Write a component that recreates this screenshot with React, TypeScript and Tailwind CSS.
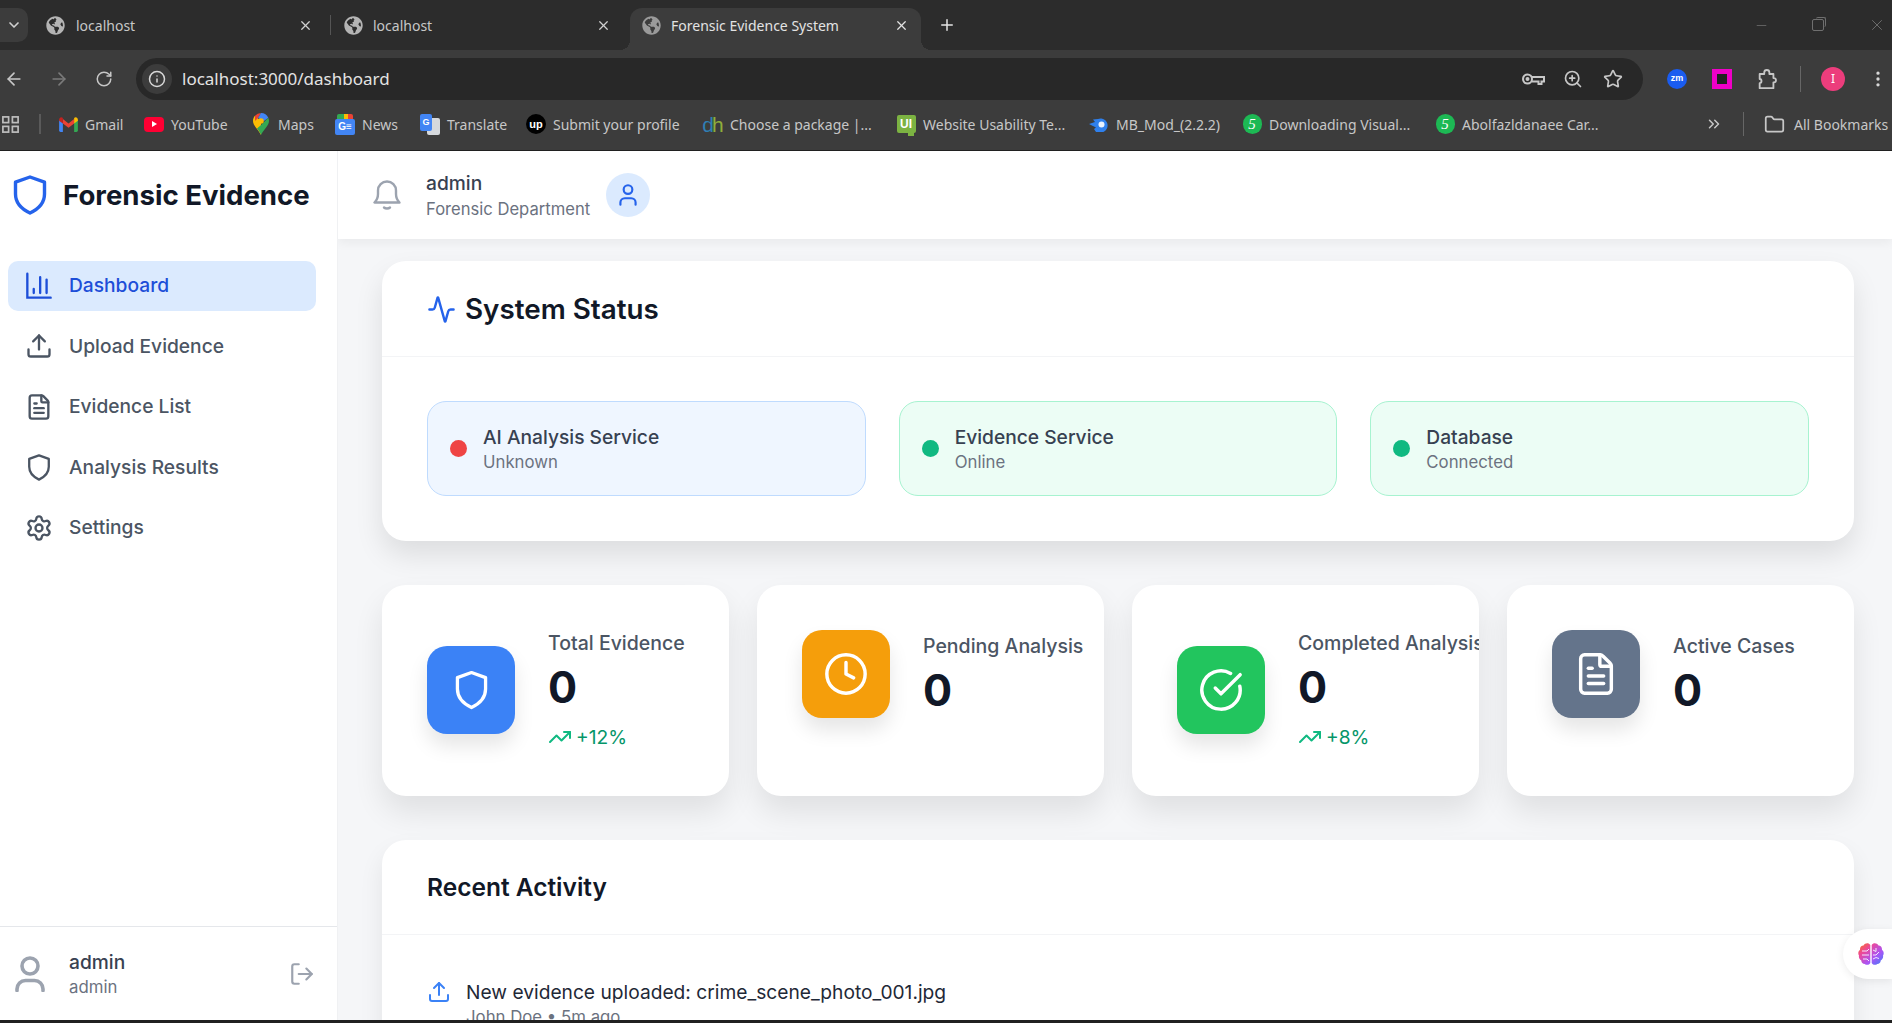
import {
  Activity,
  ArrowLeft,
  ArrowRight,
  ChevronDown,
  ChevronsRight,
  CircleCheckBig,
  Clock,
  EllipsisVertical,
  FileText,
  Folder,
  Info,
  LogOut,
  Minus,
  Plus,
  RotateCw,
  Settings,
  Star,
  TrendingUp,
  Upload,
  User,
  X,
  ZoomIn,
} from "lucide-react"
import { FaGlobeAmericas } from "react-icons/fa"
import type { ReactNode } from "react"

function ShieldIcon({ className }: { className: string }) {
  return (
    <svg viewBox="0 0 34 40" fill="none" stroke="currentColor" strokeWidth="3.4" strokeLinejoin="round" className={className}>
      <path d="M17 2 31.5 7.2V19c0 8.6-6 15-14.5 19C8.500 34 2.500 27.600 2.500 19V7.200Z" />
    </svg>
  )
}

function BarsIcon({ className }: { className: string }) {
  return (
    <svg viewBox="0 0 24 24" fill="none" stroke="currentColor" strokeWidth="2" strokeLinecap="round" className={className}>
      <path d="M2 1.500V22h20M7.500 18v-3.500M13 18V4.500M18.500 18V6.500" />
    </svg>
  )
}

function BellIcon({ className }: { className: string }) {
  return (
    <svg viewBox="0 0 28 30" fill="none" stroke="currentColor" strokeWidth="2.400" strokeLinecap="round" strokeLinejoin="round" className={className}>
      <path d="M1.500 22.500h25c-2-2-3.500-4-3.500-8.500v-3.500a9 9 0 0 0-18 0V14c0 4.500-1.500 6.500-3.500 8.500Z" />
      <path d="M11 27.500c1.500 1.300 4.500 1.300 6 0" />
    </svg>
  )
}

function PersonIcon({ className }: { className: string }) {
  return (
    <svg viewBox="0 0 30 36" fill="none" stroke="currentColor" strokeWidth="3.600" strokeLinecap="round" className={className}>
      <circle cx="15" cy="10" r="8" />
      <path d="M2 34.500V33a8.500 8.500 0 0 1 8.500-8.500h9A8.500 8.500 0 0 1 28 33v1.500" />
    </svg>
  )
}

function KeyIcon({ className }: { className: string }) {
  return (
    <svg viewBox="0 0 24 24" fill="none" stroke="currentColor" strokeWidth="2" className={className}>
      <circle cx="6.500" cy="12" r="4.500" />
      <circle cx="6.500" cy="12" r="1" fill="currentColor" />
      <path d="M11 10h12v4.500h-2.500V17h-3v-2.500H11" />
    </svg>
  )
}

function AppsIcon({ className }: { className: string }) {
  return (
    <svg viewBox="0 0 20 20" fill="none" stroke="currentColor" strokeWidth="1.800" className={className}>
      <rect x="2" y="2" width="6" height="6" />
      <rect x="12" y="2" width="6" height="6" />
      <rect x="2" y="12" width="6" height="6" />
      <rect x="12" y="12" width="6" height="6" />
    </svg>
  )
}

function ExtensionIcon({ className }: { className: string }) {
  return (
    <svg viewBox="0 0 24 24" fill="none" stroke="currentColor" strokeWidth="2" strokeLinejoin="round" className={className}>
      <path d="M4 6.500h5V5a2.800 2.800 0 0 1 5.600 0v1.500H19V11h.5a2.300 2.300 0 0 1 0 4.600H19V22H4v-5.500c1.500 0 2-1 2-2.200S5.500 12 4 12Z" />
    </svg>
  )
}

function GmailIcon() {
  return (
    <svg viewBox="0 0 20 16" className="h-[15px] w-[19px]">
      <path d="M0 3v11.500A1.500 1.500 0 0 0 1.500 16H4V6.500Z" fill="#4285f4" />
      <path d="M20 3v11.500a1.500 1.500 0 0 1-1.500 1.500H16V6.500Z" fill="#34a853" />
      <path d="M4 2 10 7l6-5v5l-6 4.500L4 7Z" fill="#ea4335" />
      <path d="M0 3c0-2.500 2.500-3.500 4-2v6L0 4Z" fill="#c5221f" />
      <path d="M20 3c0-2.500-2.500-3.500-4-2v6l4-3Z" fill="#fbbc04" />
    </svg>
  )
}

function YoutubeIcon() {
  return (
    <div className="flex h-[15px] w-[20px] items-center justify-center rounded-[4px] bg-[#ff0033]">
      <div className="h-0 w-0 border-y-[3px] border-l-[5px] border-y-transparent border-l-white" />
    </div>
  )
}

function MapsIcon() {
  return (
    <svg viewBox="0 0 16 22" className="h-[22px] w-[16px]">
      <path d="M8 22C6 17 0 13 0 8c0-2 .7-3.800 2-5.200L8 8Z" fill="#fbbc04" />
      <path d="M8 22c2-5 8-9 8-14 0-1.200-.3-2.300-.7-3.300L8 12l-4 3.500C5.500 17.500 7.200 19.500 8 22Z" fill="#34a853" />
      <path d="M2 2.800A8 8 0 0 1 8 0l-3 5L2 8Z" fill="#ea4335" />
      <path d="M8 0a8 8 0 0 1 7.300 4.700L11 8 5 5Z" fill="#4285f4" />
      <circle cx="8" cy="8" r="2.800" fill="#fbbc04" />
    </svg>
  )
}

function NewsIcon() {
  return (
    <div className="relative h-[21px] w-[20px]">
      <div className="absolute left-[2px] top-0 h-[8px] w-[16px] rounded-t-[2px] bg-[linear-gradient(90deg,#34a853_0_45%,#fbbc04_45%_70%,#ea4335_70%)]" />
      <div className="absolute bottom-0 left-0 flex h-[16px] w-[20px] items-center justify-center rounded-[2px] bg-[#4285f4] font-['Liberation_Sans',sans-serif] text-[10px] leading-none font-bold text-white">
        G≡
      </div>
    </div>
  )
}

function TranslateIcon() {
  return (
    <div className="relative h-[21px] w-[20px]">
      <div className="absolute right-0 bottom-0 h-[17px] w-[13px] rounded-[2px] bg-[#d5d8dc]" />
      <div className="absolute top-0 left-0 flex h-[17px] w-[12px] items-center justify-center rounded-[2px] bg-[#4285f4] font-['Liberation_Sans',sans-serif] text-[9px] leading-none font-bold text-white">
        G
      </div>
    </div>
  )
}

function UpworkIcon() {
  return (
    <div className="flex h-[20px] w-[20px] items-center justify-center rounded-full bg-black font-['Liberation_Sans',sans-serif] text-[11px] leading-none font-bold text-white">
      up
    </div>
  )
}

function DhIcon() {
  return (
    <div className="font-['Liberation_Sans',sans-serif] text-[21px] leading-none">
      <span className="text-[#2f7fb5]">d</span>
      <span className="ml-[-2px] text-[#8fae3a]">h</span>
    </div>
  )
}

function UiIcon() {
  return (
    <div className="relative flex h-[18px] w-[19px] items-center justify-center rounded-[2px] bg-[#7cb342] font-['Liberation_Sans',sans-serif] text-[12px] leading-none font-bold text-white">
      UI
      <div className="absolute right-[2px] bottom-[-3px] h-[5px] w-[6px] bg-[#7cb342]" />
    </div>
  )
}

function CometIcon() {
  return (
    <svg viewBox="0 0 20 16" className="h-[16px] w-[20px]">
      <path d="M0 8 6 6 4 3.500 9 3a7 7 0 1 1 0 13H7l-2-3 2-1.500Z" fill="#2f80ed" />
      <circle cx="12.500" cy="8.500" r="3" fill="#e8f2ff" />
    </svg>
  )
}

function FiveIcon() {
  return (
    <div className="flex h-[20px] w-[19px] items-center justify-center rounded-full bg-[#1db954] font-['Liberation_Serif',serif] text-[15px] leading-none text-white italic">
      5
    </div>
  )
}

function BrainIcon() {
  return (
    <svg viewBox="0 0 26 24" className="h-[24px] w-[26px]">
      <defs>
        <linearGradient id="brainFill" x1="0" y1="0" x2="1" y2="1">
          <stop offset="0" stopColor="#f97316" />
          <stop offset="0.3" stopColor="#ec4899" />
          <stop offset="0.65" stopColor="#a855f7" />
          <stop offset="1" stopColor="#3b82f6" />
        </linearGradient>
      </defs>
      <path
        d="M12.300 3v18c-1 2-4 2.500-5.500 1-2 0-3.500-1.500-3.500-3.500C1.500 17.500.5 15.500 1 13.500-.3 11.500.3 9 2 8c-.3-2.500 1.300-4.500 3.500-4.500C7 .8 10.800.5 12.300 3ZM13.700 3v18c1 2 4 2.500 5.500 1 2 0 3.500-1.500 3.500-3.500 1.800-1 2.800-3 2.300-5 1.300-2 .7-4.500-1-5.500.3-2.500-1.300-4.500-3.500-4.500C19 .8 15.200.5 13.700 3Z"
        fill="url(#brainFill)"
      />
      <path
        d="M4 9h5l2-2M4 13h7M5 17h4l2 2M15 8l3 1.500V6M15 13h3l3-3M15 17l3-1.500 3 1"
        fill="none"
        stroke="#f3e8ff"
        strokeWidth="1"
      />
    </svg>
  )
}

const bookmarks: { label: string; icon: ReactNode; width: string }[] = [
  { label: "Gmail", icon: <GmailIcon />, width: "w-[86px]" },
  { label: "YouTube", icon: <YoutubeIcon />, width: "w-[107px]" },
  { label: "Maps", icon: <MapsIcon />, width: "w-[84px]" },
  { label: "News", icon: <NewsIcon />, width: "w-[85px]" },
  { label: "Translate", icon: <TranslateIcon />, width: "w-[106px]" },
  { label: "Submit your profile", icon: <UpworkIcon />, width: "w-[177px]" },
  { label: "Choose a package |...", icon: <DhIcon />, width: "w-[193px]" },
  { label: "Website Usability Te...", icon: <UiIcon />, width: "w-[193px]" },
  { label: "MB_Mod_(2.2.2)", icon: <CometIcon />, width: "w-[153px]" },
  { label: "Downloading Visual...", icon: <FiveIcon />, width: "w-[193px]" },
  { label: "Abolfazldanaee Car...", icon: <FiveIcon />, width: "w-[270px]" },
]

function BrowserChrome() {
  return (
    <div className="h-[151px] shrink-0 font-['Noto_Sans',sans-serif] text-[#c7c7c7]">
      {/* tab strip */}
      <div className="flex h-[50px] bg-[#2c2c2c]">
        <div className="mt-[8px] flex h-[34px] w-[28px] items-center justify-center rounded-r-[10px] bg-[#3c3c3c]">
          <ChevronDown size={16} strokeWidth={2.5} className="text-[#d0d0d0]" />
        </div>
        <div className="ml-[8px] flex w-[294px] items-center pl-[10px] text-[14px]">
          <FaGlobeAmericas size={19} className="text-[#b4b4b4]" />
          <span className="ml-[11px]">localhost</span>
          <X size={15} className="mr-[17px] ml-auto text-[#d0d0d0]" />
        </div>
        <div className="my-[15px] w-px bg-[#555555]" />
        <div className="flex w-[299px] items-center pl-[13px] text-[14px]">
          <FaGlobeAmericas size={19} className="text-[#b4b4b4]" />
          <span className="ml-[10px]">localhost</span>
          <X size={15} className="mr-[19px] ml-auto text-[#d0d0d0]" />
        </div>
        <div className="relative mt-[8px] flex h-[42px] w-[291px] items-center rounded-t-[12px] bg-[#3c3c3c] pb-[8px] pl-[12px] text-[14px] text-[#e3e3e3]">
          <div className="absolute bottom-0 left-[-10px] size-[10px] bg-[radial-gradient(circle_at_0_0,transparent_10px,#3c3c3c_10px)]" />
          <div className="absolute right-[-10px] bottom-0 size-[10px] bg-[radial-gradient(circle_at_100%_0,transparent_10px,#3c3c3c_10px)]" />
          <FaGlobeAmericas size={19} className="text-[#9a9a9a]" />
          <span className="ml-[10px] whitespace-nowrap">Forensic Evidence System</span>
          <X size={15} className="mr-[12px] ml-auto text-[#e3e3e3]" />
        </div>
        <div className="ml-[17px] flex items-center">
          <Plus size={18} className="text-[#e3e3e3]" />
        </div>
        <div className="ml-auto flex items-center text-[#6f6f6f]">
          <Minus size={15} strokeWidth={1.25} className="mr-[43px]" />
          <div className="relative mr-[44px] size-[12px] rounded-[2px] border border-[#6f6f6f]">
            <div className="absolute top-[-3px] right-[-3px] h-[10px] w-[10px] rounded-[2px] border-t border-r border-[#6f6f6f]" />
          </div>
          <X size={18} strokeWidth={1.25} className="mr-[6px]" />
        </div>
      </div>

      {/* address bar and bookmarks */}
      <div className="h-[100px] bg-[#3c3c3c]">
        <div className="flex h-[50px] items-end">
          <div className="flex h-[42px] w-[136px] items-center text-[#c7c7c7]">
            <ArrowLeft size={20} className="ml-[4px]" />
            <ArrowRight size={20} className="ml-[25px] text-[#7a7a7a]" />
            <RotateCw size={18} className="ml-[26px]" />
          </div>
          <div className="flex h-[42px] w-[1507px] items-center rounded-full bg-[#282828] pr-[20px] pl-[6px]">
            <div className="flex size-[30px] items-center justify-center rounded-full bg-[#3c3c3c]">
              <Info size={18} className="text-[#d8d8d8]" />
            </div>
            <span className="ml-[10px] text-[17px] text-[#e3e3e3]">localhost:3000/dashboard</span>
            <KeyIcon className="ml-auto h-[24px] w-[24px] text-[#c7c7c7]" />
            <ZoomIn size={20} className="ml-[18px] text-[#c7c7c7]" />
            <Star size={20} className="ml-[20px] text-[#c7c7c7]" />
          </div>
          <div className="flex h-[42px] flex-1 items-center">
            <div className="ml-[24px] flex size-[20px] items-center justify-center rounded-full bg-[#1a5cf0] font-['Liberation_Sans',sans-serif] text-[9px] font-bold text-white">
              zm
            </div>
            <div className="ml-[25px] size-[20px] border-[5px] border-[#f000c8] bg-[#222222]" />
            <ExtensionIcon className="ml-[24px] size-[22px] text-[#c7c7c7]" />
            <div className="ml-[22px] h-[26px] w-px bg-[#666666]" />
            <div className="ml-[20px] flex size-[24px] items-center justify-center rounded-full bg-[#ec3d7c] text-[12px] text-white">
              I
            </div>
            <EllipsisVertical size={20} className="ml-[23px] text-[#d8d8d8]" />
          </div>
        </div>
        <div className="flex h-[50px] items-center pb-[2px] text-[14px]">
          <AppsIcon className="ml-[1px] h-[19px] w-[19px] text-[#bdbdbd]" />
          <div className="mr-[17px] ml-[19px] h-[20px] w-[2px] bg-[#5a5a5a]" />
          {bookmarks.map((b) => (
            <div key={b.label} className={`flex items-center gap-[7px] whitespace-nowrap ${b.width}`}>
              <div className="flex w-[20px] shrink-0 justify-center">{b.icon}</div>
              <span>{b.label}</span>
            </div>
          ))}
          <ChevronsRight size={18} className="text-[#c7c7c7]" />
          <div className="mr-[20px] ml-[20px] h-[24px] w-px bg-[#666666]" />
          <Folder size={21} className="text-[#c7c7c7]" />
          <span className="ml-[9px] whitespace-nowrap">All Bookmarks</span>
        </div>
      </div>
    </div>
  )
}

const navItems = [
  { label: "Dashboard", icon: <BarsIcon className="size-[28px]" />, active: true },
  { label: "Upload Evidence", icon: <Upload size={28} /> },
  { label: "Evidence List", icon: <FileText size={28} /> },
  { label: "Analysis Results", icon: <ShieldIcon className="h-[27px] w-[28px]" /> },
  { label: "Settings", icon: <Settings size={28} /> },
]

function Sidebar() {
  return (
    <aside className="flex w-[338px] shrink-0 flex-col border-r border-[#f0f1f3] bg-white">
      <div className="flex h-[88px] items-center pl-[13px]">
        <ShieldIcon className="h-[40px] w-[34px] text-[#2563eb]" />
        <span className="ml-[16px] pt-[1px] text-[27.6px] leading-none font-bold whitespace-nowrap text-[#111827]">Forensic Evidence</span>
      </div>
      <nav className="mt-[22px] flex flex-col gap-[10.4px] pr-[21px] pl-[8px]">
        {navItems.map((item) => (
          <div
            key={item.label}
            className={`flex h-[50px] items-center gap-[16px] rounded-[10px] pl-[17px] text-[19.2px] font-medium ${
              item.active ? "bg-[#dbeafe] pb-[1px] text-[#1d4ed8]" : "text-[#4b5563]"
            }`}
          >
            {item.icon}
            <span>{item.label}</span>
          </div>
        ))}
      </nav>
      <div className="mt-auto flex h-[94px] items-center border-t border-[#e5e7eb] pr-[22px] pl-[15px]">
        <PersonIcon className="h-[36px] w-[30px] text-[#9ca3af]" />
        <div className="ml-[24px]">
          <div className="text-[19.2px] leading-[27px] font-medium text-[#374151]">admin</div>
          <div className="text-[16.8px] leading-[23px] text-[#6b7280]">admin</div>
        </div>
        <LogOut size={26} className="ml-auto text-[#9ca3af]" />
      </div>
    </aside>
  )
}

const services = [
  { name: "AI Analysis Service", status: "Unknown", box: "border-[#bfdbfe] bg-[#eff6ff]", dot: "bg-[#ef4444]" },
  { name: "Evidence Service", status: "Online", box: "border-[#a7f3d0] bg-[#ecfdf5]", dot: "bg-[#10b981]" },
  { name: "Database", status: "Connected", box: "border-[#a7f3d0] bg-[#ecfdf5]", dot: "bg-[#10b981]" },
]

const stats = [
  {
    title: "Total Evidence",
    trend: "+12%",
    color: "bg-[#3b82f6]",
    icon: <ShieldIcon className="h-[40px] w-[33px] text-white" />,
  },
  {
    title: "Pending Analysis",
    color: "bg-[#f59e0b]",
    icon: <Clock size={46} strokeWidth={1.8} className="text-white" />,
  },
  {
    title: "Completed Analysis",
    trend: "+8%",
    color: "bg-[#22c55e]",
    icon: <CircleCheckBig size={46} strokeWidth={1.8} className="text-white" />,
  },
  {
    title: "Active Cases",
    color: "bg-[#64748b]",
    icon: <FileText size={46} strokeWidth={1.8} className="text-white" />,
  },
]

function Dashboard() {
  return (
    <div className="flex flex-col gap-[44px] pt-[22px] pr-[38px] pl-[44px]">
      <section className="h-[280px] shrink-0 rounded-[24px] bg-white shadow-[0_14px_28px_rgba(0,0,0,0.1)]">
        <div className="flex h-[96px] items-center gap-[9px] border-b border-[#f3f4f6] px-[45px] pt-[2px]">
          <Activity size={29} className="text-[#2563eb]" />
          <h2 className="text-[27.8px] font-semibold text-[#111827]">System Status</h2>
        </div>
        <div className="grid grid-cols-3 gap-[33px] px-[45px] pt-[44px]">
          {services.map((s) => (
            <div key={s.name} className={`flex h-[95px] items-center gap-[16px] rounded-[19px] border pl-[22px] ${s.box}`}>
              <div className={`size-[17px] rounded-full ${s.dot}`} />
              <div>
                <div className="text-[19.2px] leading-[27px] font-medium text-[#374151]">{s.name}</div>
                <div className="text-[16.8px] leading-[23px] text-[#6b7280]">{s.status}</div>
              </div>
            </div>
          ))}
        </div>
      </section>

      <div className="grid grid-cols-4 gap-[28px]">
        {stats.map((s) => (
          <div key={s.title} className="rounded-[24px] bg-white shadow-[0_16px_30px_rgba(0,0,0,0.09)]">
            <div className="overflow-hidden rounded-[24px] p-[45px]">
              <div className="flex items-center gap-[33px]">
                <div className={`flex size-[88px] shrink-0 items-center justify-center rounded-[20px] shadow-[0_12px_20px_rgba(0,0,0,0.1)] ${s.color}`}>
                  {s.icon}
                </div>
                <div className={`whitespace-nowrap ${s.trend ? "" : "pb-[3px]"}`}>
                  <div className="text-[19.5px] leading-[27px] font-medium text-[#4b5563]">{s.title}</div>
                  <div className="mt-[8.500px] text-[43.2px] leading-[43px] font-bold text-[#111827]">0</div>
                  {s.trend && (
                    <div className="mt-[15px] flex items-center gap-[4px] text-[19.2px] leading-[27px] text-[#059669]">
                      <TrendingUp size={24} className="text-[#10b981]" />
                      {s.trend}
                    </div>
                  )}
                </div>
              </div>
            </div>
          </div>
        ))}
      </div>

      <section className="shrink-0 rounded-[24px] bg-white shadow-[0_12px_24px_rgba(0,0,0,0.08)]">
        <div className="flex h-[95px] items-center border-b border-[#f3f4f6] px-[45px] pt-[1px]">
          <h2 className="text-[24.5px] font-semibold text-[#111827]">Recent Activity</h2>
        </div>
        <div className="px-[45px] pt-[44px] pb-[40px]">
          <div className="flex items-center gap-[15px]">
            <Upload size={24} className="text-[#3b82f6]" />
            <div className="text-[19.2px] leading-[27px] text-[#1f2937]">New evidence uploaded: crime_scene_photo_001.jpg</div>
          </div>
          <div className="ml-[39px] text-[16.8px] leading-[23px] text-[#6b7280]">John Doe • 5m ago</div>
        </div>
      </section>
    </div>
  )
}

export default function App() {
  return (
    <div className="flex h-screen w-full flex-col overflow-hidden bg-[#202020] font-['Inter',sans-serif]">
      <BrowserChrome />
      <div className="flex h-[869px] shrink-0">
        <Sidebar />
        <main className="relative flex min-w-0 flex-1 flex-col overflow-hidden bg-[#f5f6f8]">
          <header className="relative z-10 flex h-[88px] shrink-0 items-center bg-white pl-[35px] shadow-[0_4px_10px_rgba(0,0,0,0.05)]">
            <BellIcon className="h-[30px] w-[28px] text-[#9ca3af]" />
            <div className="ml-[25px]">
              <div className="text-[19.2px] leading-[27px] font-medium text-[#374151]">admin</div>
              <div className="mt-[1px] text-[16.6px] leading-[23px] text-[#6b7280]">Forensic Department</div>
            </div>
            <div className="ml-[16px] flex size-[44px] items-center justify-center rounded-full bg-[#dbeafe]">
              <User size={26} className="text-[#2563eb]" />
            </div>
          </header>
          <Dashboard />
          <div className="absolute top-[778px] right-0 z-20 flex h-[50px] w-[49px] items-center rounded-l-[25px] bg-white pl-[15px] shadow-[0_2px_8px_rgba(0,0,0,0.08)]">
            <BrainIcon />
          </div>
        </main>
      </div>
    </div>
  )
}
